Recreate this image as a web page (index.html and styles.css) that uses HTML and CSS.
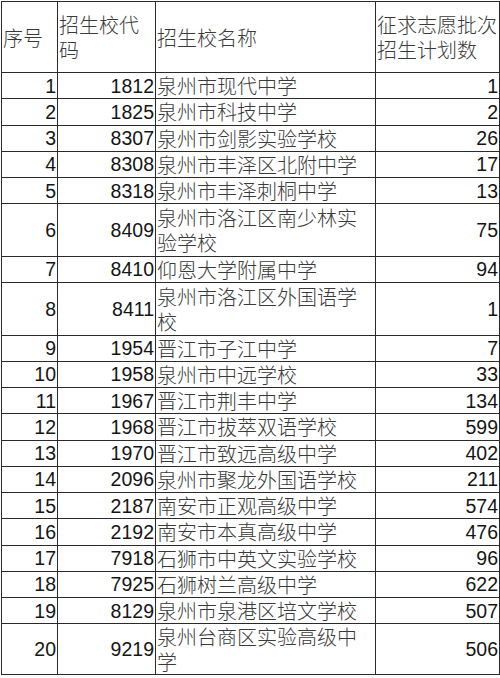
FILE: index.html
```html
<!DOCTYPE html>
<html lang="zh">
<head>
<meta charset="utf-8">
<title>征求志愿批次招生计划</title>
<link rel="stylesheet" href="styles.css">
</head>
<body>
<table class="plan">
<colgroup>
<col class="c-no"><col class="c-code"><col class="c-name"><col class="c-num">
</colgroup>
<thead>
<tr class="head">
<th class="txt">序号</th>
<th class="txt">招生校代码</th>
<th class="txt">招生校名称</th>
<th class="txt">征求志愿批次招生计划数</th>
</tr>
</thead>
<tbody>
<tr><td class="num">1</td><td class="num">1812</td><td class="txt">泉州市现代中学</td><td class="num">1</td></tr>
<tr><td class="num">2</td><td class="num">1825</td><td class="txt">泉州市科技中学</td><td class="num">2</td></tr>
<tr><td class="num">3</td><td class="num">8307</td><td class="txt">泉州市剑影实验学校</td><td class="num">26</td></tr>
<tr><td class="num">4</td><td class="num">8308</td><td class="txt">泉州市丰泽区北附中学</td><td class="num">17</td></tr>
<tr><td class="num">5</td><td class="num">8318</td><td class="txt">泉州市丰泽刺桐中学</td><td class="num">13</td></tr>
<tr class="dbl"><td class="num">6</td><td class="num">8409</td><td class="txt">泉州市洛江区南少林实验学校</td><td class="num">75</td></tr>
<tr><td class="num">7</td><td class="num">8410</td><td class="txt">仰恩大学附属中学</td><td class="num">94</td></tr>
<tr class="dbl"><td class="num">8</td><td class="num">8411</td><td class="txt">泉州市洛江区外国语学校</td><td class="num">1</td></tr>
<tr><td class="num">9</td><td class="num">1954</td><td class="txt">晋江市子江中学</td><td class="num">7</td></tr>
<tr><td class="num">10</td><td class="num">1958</td><td class="txt">泉州市中远学校</td><td class="num">33</td></tr>
<tr><td class="num">11</td><td class="num">1967</td><td class="txt">晋江市荆丰中学</td><td class="num">134</td></tr>
<tr><td class="num">12</td><td class="num">1968</td><td class="txt">晋江市拔萃双语学校</td><td class="num">599</td></tr>
<tr><td class="num">13</td><td class="num">1970</td><td class="txt">晋江市致远高级中学</td><td class="num">402</td></tr>
<tr><td class="num">14</td><td class="num">2096</td><td class="txt">泉州市聚龙外国语学校</td><td class="num">211</td></tr>
<tr><td class="num">15</td><td class="num">2187</td><td class="txt">南安市正观高级中学</td><td class="num">574</td></tr>
<tr><td class="num">16</td><td class="num">2192</td><td class="txt">南安市本真高级中学</td><td class="num">476</td></tr>
<tr><td class="num">17</td><td class="num">7918</td><td class="txt">石狮市中英文实验学校</td><td class="num">96</td></tr>
<tr><td class="num">18</td><td class="num">7925</td><td class="txt">石狮树兰高级中学</td><td class="num">622</td></tr>
<tr><td class="num">19</td><td class="num">8129</td><td class="txt">泉州市泉港区培文学校</td><td class="num">507</td></tr>
<tr class="dbl last"><td class="num">20</td><td class="num">9219</td><td class="txt">泉州台商区实验高级中学</td><td class="num">506</td></tr>
</tbody>
</table>
</body>
</html>
```
FILE: styles.css
```css
html, body {
  margin: 0;
  padding: 0;
  background: #ffffff;
}
body {
  padding: 1px 0 0 1px;
}
.plan {
  border-collapse: collapse;
  table-layout: fixed;
  width: 498px;
}
.c-no { width: 56px; }
.c-code { width: 98px; }
.c-name { width: 220px; }
.c-num { width: 124px; }
.plan th, .plan td {
  border: 1px solid #2a2a2a;
  padding: 0 1px;
  vertical-align: middle;
  overflow: hidden;
}
.head {
  height: 71px;
}
.plan tbody tr {
  height: 26.25px;
}
.plan tbody tr.dbl {
  height: 52.5px;
}
.plan tbody tr.last {
  height: 51px;
}
.txt {
  font-family: "Noto Sans CJK SC", "Noto Sans", sans-serif;
  font-size: 20px;
  font-weight: 300;
  line-height: 25px;
  color: #3a3a3a;
  text-align: left;
  word-break: break-all;
}
.num {
  font-family: "Liberation Sans", Arial, sans-serif;
  font-size: 19.5px;
  line-height: 22px;
  color: #151515;
  text-align: right;
  padding-right: 0;
}
```
